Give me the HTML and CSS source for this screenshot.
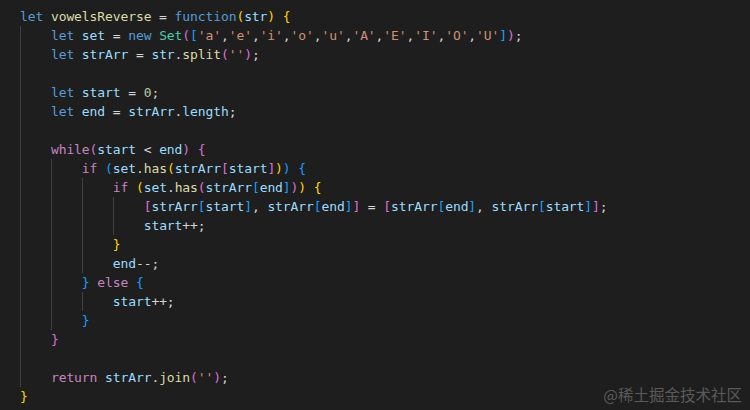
FILE: index.html
```html
<!DOCTYPE html>
<html>
<head>
<meta charset="utf-8">
<link rel="stylesheet" href="styles.css">
</head>
<body>
<div class="editor">
<div class="code">
<div class="line"><span class="k">let</span> <span class="f">vowelsReverse</span> = <span class="k">function</span><span class="b1">(</span><span class="v">str</span><span class="b1">)</span> <span class="b1">{</span></div>
<div class="line"><span class="ind">    </span><span class="k">let</span> <span class="v">set</span> = <span class="k">new</span> <span class="t">Set</span><span class="b2">(</span><span class="b3">[</span><span class="s">'a'</span>,<span class="s">'e'</span>,<span class="s">'i'</span>,<span class="s">'o'</span>,<span class="s">'u'</span>,<span class="s">'A'</span>,<span class="s">'E'</span>,<span class="s">'I'</span>,<span class="s">'O'</span>,<span class="s">'U'</span><span class="b3">]</span><span class="b2">)</span>;</div>
<div class="line"><span class="ind">    </span><span class="k">let</span> <span class="v">strArr</span> = <span class="v">str</span>.<span class="f">split</span><span class="b2">(</span><span class="s">''</span><span class="b2">)</span>;</div>
<div class="line"><span class="ind">    </span></div>
<div class="line"><span class="ind">    </span><span class="k">let</span> <span class="v">start</span> = <span class="n">0</span>;</div>
<div class="line"><span class="ind">    </span><span class="k">let</span> <span class="v">end</span> = <span class="v">strArr</span>.<span class="v">length</span>;</div>
<div class="line"><span class="ind">    </span></div>
<div class="line"><span class="ind">    </span><span class="c">while</span><span class="b2">(</span><span class="v">start</span> &lt; <span class="v">end</span><span class="b2">)</span> <span class="b2">{</span></div>
<div class="line"><span class="ind">    </span><span class="ind">    </span><span class="c">if</span> <span class="b3">(</span><span class="v">set</span>.<span class="f">has</span><span class="b1">(</span><span class="v">strArr</span><span class="b2">[</span><span class="v">start</span><span class="b2">]</span><span class="b1">)</span><span class="b3">)</span> <span class="b3">{</span></div>
<div class="line"><span class="ind">    </span><span class="ind">    </span><span class="ind">    </span><span class="c">if</span> <span class="b1">(</span><span class="v">set</span>.<span class="f">has</span><span class="b2">(</span><span class="v">strArr</span><span class="b3">[</span><span class="v">end</span><span class="b3">]</span><span class="b2">)</span><span class="b1">)</span> <span class="b1">{</span></div>
<div class="line"><span class="ind">    </span><span class="ind">    </span><span class="ind">    </span><span class="ind">    </span><span class="b2">[</span><span class="v">strArr</span><span class="b3">[</span><span class="v">start</span><span class="b3">]</span>, <span class="v">strArr</span><span class="b3">[</span><span class="v">end</span><span class="b3">]</span><span class="b2">]</span> = <span class="b2">[</span><span class="v">strArr</span><span class="b3">[</span><span class="v">end</span><span class="b3">]</span>, <span class="v">strArr</span><span class="b3">[</span><span class="v">start</span><span class="b3">]</span><span class="b2">]</span>;</div>
<div class="line"><span class="ind">    </span><span class="ind">    </span><span class="ind">    </span><span class="ind">    </span><span class="v">start</span>++;</div>
<div class="line"><span class="ind">    </span><span class="ind">    </span><span class="ind">    </span><span class="b1">}</span></div>
<div class="line"><span class="ind">    </span><span class="ind">    </span><span class="ind">    </span><span class="v">end</span>--;</div>
<div class="line"><span class="ind">    </span><span class="ind">    </span><span class="b3">}</span> <span class="c">else</span> <span class="b3">{</span></div>
<div class="line"><span class="ind">    </span><span class="ind">    </span><span class="ind">    </span><span class="v">start</span>++;</div>
<div class="line"><span class="ind">    </span><span class="ind">    </span><span class="b3">}</span></div>
<div class="line"><span class="ind">    </span><span class="b2">}</span></div>
<div class="line"><span class="ind">    </span></div>
<div class="line"><span class="ind">    </span><span class="c">return</span> <span class="v">strArr</span>.<span class="f">join</span><span class="b2">(</span><span class="s">''</span><span class="b2">)</span>;</div>
<div class="line"><span class="b1">}</span></div>
</div>
<div class="mark">@稀土掘金技术社区</div>
</div>
</body>
</html>
```
FILE: styles.css
```css
html, body {
  margin: 0;
  padding: 0;
  background: #1e1e1e;
}
.editor {
  position: relative;
  width: 750px;
  height: 410px;
  background: #1e1e1e;
  overflow: hidden;
}
.code {
  padding: 7px 0 0 20px;
  font-family: "DejaVu Sans Mono", monospace;
  font-size: 13px;
  letter-spacing: -0.1px;
  color: #d4d4d4;
}
.line {
  height: 19px;
  line-height: 19px;
  white-space: pre;
}
.ind {
  display: inline-block;
  vertical-align: top;
  height: 19px;
  box-shadow: inset 1px 0 0 #404040;
}
.k { color: #569cd6; }
.c { color: #c586c0; }
.v { color: #9cdcfe; }
.f { color: #dcdcaa; }
.t { color: #4ec9b0; }
.s { color: #ce9178; }
.n { color: #b5cea8; }
.b1 { color: #ffd700; }
.b2 { color: #da70d6; }
.b3 { color: #179fff; }
.mark {
  position: absolute;
  right: 8px;
  bottom: 6px;
  font-family: "Noto Sans CJK SC", sans-serif;
  font-size: 15.5px;
  line-height: 20px;
  color: #5a5a5a;
}
```
